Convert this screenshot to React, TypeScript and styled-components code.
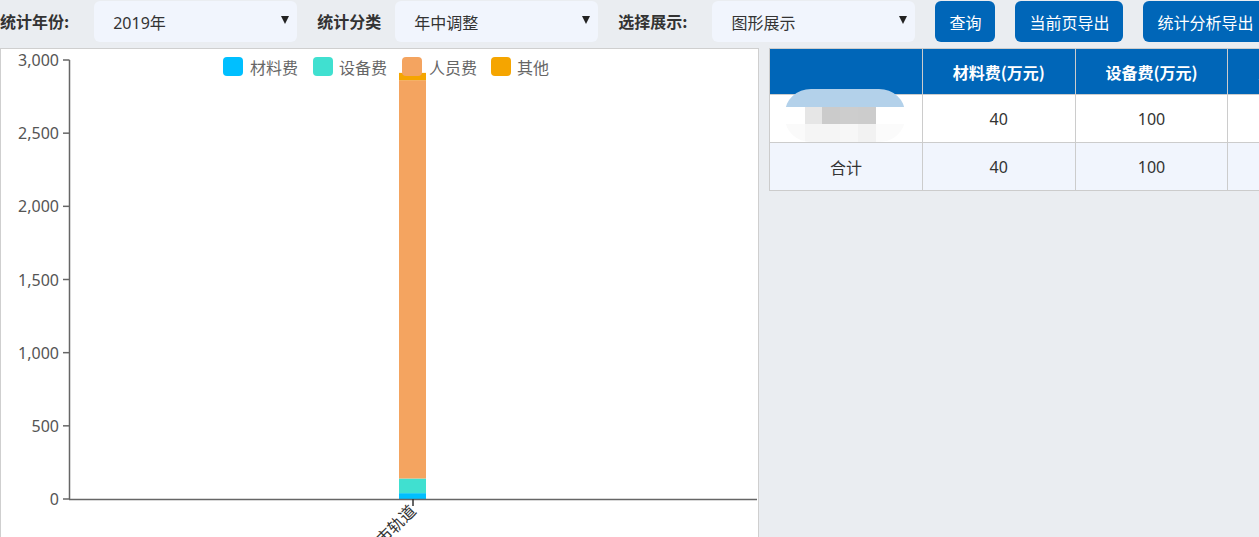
import styled, { createGlobalStyle } from "styled-components"

const GlobalStyle = createGlobalStyle`
	html, body {
		margin: 0;
		padding: 0;
		background-color: #eaedf1;
		overflow: hidden;
		font-family: "Noto Sans", "Noto Sans CJK SC", sans-serif;
	}
`

const Page = styled.div`
	width: 1259px;
	height: 537px;
	overflow: hidden;
`

const Toolbar = styled.div`
	display: flex;
	align-items: flex-start;
	height: 48px;
	padding-top: 1px;
	box-sizing: border-box;
	white-space: nowrap;
	& > * {
		flex-shrink: 0;
	}
`

const FieldLabel = styled.span<{ $gap: number }>`
	height: 41px;
	line-height: 41px;
	margin-right: ${({ $gap }) => $gap}px;
	font-family: "Noto Sans CJK SC", sans-serif;
	font-size: 16px;
	font-weight: bold;
	color: #333;
`

const SelectBox = styled.div`
	display: flex;
	align-items: center;
	justify-content: space-between;
	width: 203px;
	height: 41px;
	padding: 0 8px 0 19px;
	box-sizing: border-box;
	border-radius: 6px;
	background-color: #f1f5fd;
	font-family: "Noto Sans", "Noto Sans CJK SC", sans-serif;
	font-size: 16px;
	color: #333;
	margin-right: 20px;
`

const Caret = styled.span`
	width: 0;
	height: 0;
	margin-top: -4px;
	border-left: 4px solid transparent;
	border-right: 4px solid transparent;
	border-top: 8px solid #222;
`

const Button = styled.button`
	height: 41px;
	padding: 0 14px;
	margin-right: 20px;
	border: none;
	border-radius: 6px;
	background-color: #0066b8;
	color: #fff;
	font-family: "Noto Sans CJK SC", sans-serif;
	font-size: 16px;
`

const Main = styled.div`
	display: flex;
	align-items: flex-start;
	gap: 10px;
`

const ChartPanel = styled.div`
	width: 759px;
	height: 500px;
	flex-shrink: 0;
	box-sizing: border-box;
	border: 1px solid #cfcfcf;
	background-color: #fff;
	svg {
		display: block;
	}
`

const TableWrap = styled.div`
	flex: 1;
	overflow: hidden;
`

const Table = styled.table`
	border-collapse: collapse;
	table-layout: fixed;
	width: 765px;
	font-size: 16px;
	color: #333;
	td, th {
		border: 1px solid #cccccc;
		text-align: center;
		padding: 0;
	}
`

const HeadCell = styled.th`
	height: 45px;
	background-color: #0066b8;
	color: #fff;
	font-family: "Noto Sans CJK SC", sans-serif;
	font-weight: bold;
`

const Row = styled.tr<{ $striped?: boolean }>`
	height: 48px;
	background-color: ${({ $striped }) => ($striped ? "#f1f5fd" : "#fff")};
`

const PictureCell = styled.td`
	vertical-align: bottom;
`

const Mosaic = styled.div`
	margin: -6px 0 0 15px;
	width: 120px;
	height: 53px;
	border-radius: 26px / 24px;
	overflow: hidden;
	display: grid;
	grid-template-columns: 20px 17px 18px 18px 18px 29px;
	grid-template-rows: 18px 17px 18px;
`

const MosaicBand = styled.div`
	grid-column: 1 / -1;
	background-color: #b3d1ea;
`

const MosaicTile = styled.div<{ $c: string }>`
	background-color: ${({ $c }) => $c};
`

const tiles = [
	"#ffffff", "#e6e6e6", "#cbcbcb", "#cdcdcd", "#cccccc", "#ffffff",
	"#fafafa", "#f5f5f5", "#f5f5f5", "#f7f7f7", "#f2f2f2", "#fbfbfb"
]

const yTicks = [0, 500, 1000, 1500, 2000, 2500, 3000]
const y0 = 499
const scale = 439 / 3000
const yOf = (v: number) => y0 - v * scale

const segments = [
	{ from: 0, to: 40, color: "#00bfff" },
	{ from: 40, to: 140, color: "#40e0d0" },
	{ from: 140, to: 2862, color: "#f4a460" },
	{ from: 2862, to: 2912, color: "#f5a500" }
]

const legend = [
	{ x: 223, tx: 250, label: "材料费", color: "#00bfff" },
	{ x: 313, tx: 339, label: "设备费", color: "#40e0d0" },
	{ x: 402, tx: 429, label: "人员费", color: "#f4a460" },
	{ x: 491, tx: 517, label: "其他", color: "#f5a500" }
]

function BarChart() {
	return (
		<svg width={757} height={498} viewBox="1 49 757 498" fontFamily='"Noto Sans", "Noto Sans CJK SC", sans-serif'>
			<line x1={69.5} y1={60} x2={69.5} y2={y0} stroke="#666" strokeWidth={1.5}/>
			{yTicks.map(v => (
				<g key={v}>
					<line x1={63} y1={yOf(v)} x2={69.5} y2={yOf(v)} stroke="#666" strokeWidth={1.5}/>
					<text x={59} y={yOf(v)} textAnchor="end" dominantBaseline="central" fontSize={16} fill="#555">
						{v.toLocaleString("en-US")}
					</text>
				</g>
			))}
			{segments.map(s => (
				<rect key={s.color} x={399} y={yOf(s.to)} width={27} height={(s.to - s.from) * scale} fill={s.color}/>
			))}
			<line x1={69} y1={y0 + 0.5} x2={757} y2={y0 + 0.5} stroke="#666" strokeWidth={1.5}/>
			<line x1={413} y1={y0} x2={413} y2={506} stroke="#333" strokeWidth={1.5}/>
			<text x={417} y={512} textAnchor="end" fontSize={16} fill="#333" transform="rotate(-45 417 512)"
				fontFamily='"Noto Sans CJK SC", sans-serif'>
				城市轨道
			</text>
			{legend.map(l => (
				<g key={l.label}>
					<rect x={l.x} y={57} width={20} height={19} rx={4} fill={l.color}/>
					<text x={l.tx} y={66.5} dominantBaseline="central" fontSize={16} fill="#666"
						fontFamily='"Noto Sans CJK SC", sans-serif'>
						{l.label}
					</text>
				</g>
			))}
		</svg>
	)
}

export default function App() {
	return (
		<Page>
			<GlobalStyle/>
			<Toolbar>
				<FieldLabel $gap={25}>统计年份:</FieldLabel>
				<SelectBox>2019年<Caret/></SelectBox>
				<FieldLabel $gap={14}>统计分类</FieldLabel>
				<SelectBox>年中调整<Caret/></SelectBox>
				<FieldLabel $gap={25}>选择展示:</FieldLabel>
				<SelectBox>图形展示<Caret/></SelectBox>
				<Button>查询</Button>
				<Button>当前页导出</Button>
				<Button>统计分析导出</Button>
			</Toolbar>
			<Main>
				<ChartPanel>
					<BarChart/>
				</ChartPanel>
				<TableWrap>
					<Table>
						<thead>
							<tr>
								<HeadCell></HeadCell>
								<HeadCell>材料费(万元)</HeadCell>
								<HeadCell>设备费(万元)</HeadCell>
								<HeadCell>人员费(万元)</HeadCell>
								<HeadCell>其他(万元)</HeadCell>
							</tr>
						</thead>
						<tbody>
							<Row>
								<PictureCell>
									<Mosaic>
										<MosaicBand/>
										{tiles.map((c, i) => <MosaicTile key={i} $c={c}/>)}
									</Mosaic>
								</PictureCell>
								<td>40</td>
								<td>100</td>
								<td>2722</td>
								<td>50</td>
							</Row>
							<Row $striped>
								<td>合计</td>
								<td>40</td>
								<td>100</td>
								<td>2722</td>
								<td>50</td>
							</Row>
						</tbody>
					</Table>
				</TableWrap>
			</Main>
		</Page>
	)
}
